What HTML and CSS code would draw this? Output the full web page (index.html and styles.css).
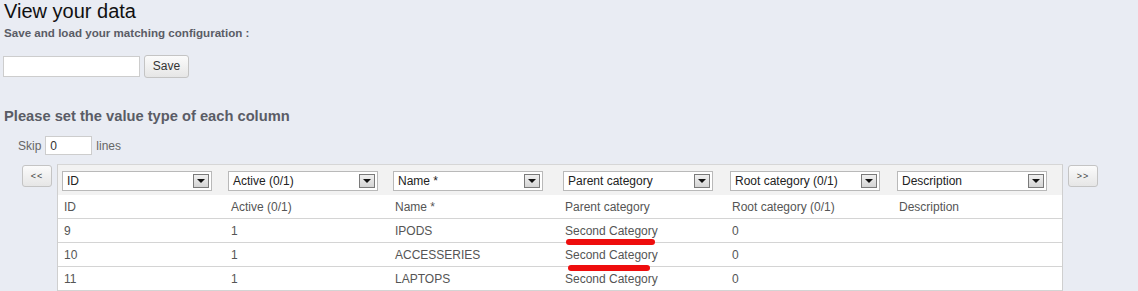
FILE: index.html
```html
<!DOCTYPE html>
<html lang="en">
  <head>
    <meta charset="UTF-8" />
    <title>View your data</title>
    <link rel="stylesheet" href="styles.css">
  </head>
  <body>
    <div class="page">
      <h1>View your data</h1>
      <p class="subtitle">Save and load your matching configuration :</p>

      <div class="save-row">
        <input type="text" class="text-input config-name" />
        <button class="btn btn-save">Save</button>
      </div>

      <h2>Please set the value type of each column</h2>

      <div class="skip-row">
        <span>Skip</span>
        <input type="text" class="text-input skip-input" value="0" />
        <span>lines</span>
      </div>

      <div class="matching">
        <button class="btn btn-nav">&lt;&lt;</button>

        <div class="grid-box">
          <table class="data-table">
            <thead>
              <tr class="type-row">
                <th class="col-1"><div class="fake-select"><span>ID</span><span class="arrow"></span></div></th>
                <th class="col-2"><div class="fake-select"><span>Active (0/1)</span><span class="arrow"></span></div></th>
                <th class="col-3"><div class="fake-select"><span>Name *</span><span class="arrow"></span></div></th>
                <th class="col-4"><div class="fake-select"><span>Parent category</span><span class="arrow"></span></div></th>
                <th class="col-5"><div class="fake-select"><span>Root category (0/1)</span><span class="arrow"></span></div></th>
                <th class="col-6"><div class="fake-select"><span>Description</span><span class="arrow"></span></div></th>
              </tr>
            </thead>
            <tbody>
              <tr>
                <td>ID</td>
                <td>Active (0/1)</td>
                <td>Name *</td>
                <td>Parent category</td>
                <td>Root category (0/1)</td>
                <td>Description</td>
              </tr>
              <tr>
                <td>9</td>
                <td>1</td>
                <td>IPODS</td>
                <td class="marked">Second Category<span class="mark mark-1"></span></td>
                <td>0</td>
                <td></td>
              </tr>
              <tr>
                <td>10</td>
                <td>1</td>
                <td>ACCESSERIES</td>
                <td class="marked">Second Category<span class="mark mark-2"></span></td>
                <td>0</td>
                <td></td>
              </tr>
              <tr>
                <td>11</td>
                <td>1</td>
                <td>LAPTOPS</td>
                <td>Second Category</td>
                <td>0</td>
                <td></td>
              </tr>
            </tbody>
          </table>
        </div>

        <button class="btn btn-nav">&gt;&gt;</button>
      </div>
    </div>
  </body>
</html>
```

FILE: styles.css
```css
body {
  margin: 0;
  background: #e9ecf3;
  font-family: "Liberation Sans", Arial, sans-serif;
  color: #555;
  overflow: hidden;
}

.page {
  padding-left: 4px;
}

h1 {
  margin: 0;
  font-size: 20px;
  line-height: 22px;
  font-weight: normal;
  color: #111;
}

.subtitle {
  margin: 4px 0 0 0;
  font-size: 11.6px;
  line-height: 14px;
  font-weight: bold;
  color: #5a5c66;
}

.save-row {
  display: flex;
  align-items: center;
  gap: 4px;
  margin-top: 15px;
  margin-left: -1px;
  height: 22px;
}

.text-input {
  box-sizing: border-box;
  border: 1px solid #cdcdcd;
  background: #fff;
  font-family: inherit;
  font-size: 12px;
  color: #333;
  padding: 0 4px;
  margin: 0;
  outline: none;
}

.config-name {
  width: 137px;
  height: 21px;
}

.btn {
  box-sizing: border-box;
  border: 1px solid #c4c4c4;
  border-radius: 3px;
  background: linear-gradient(#fbfbfb, #e6e6e6);
  font-family: inherit;
  color: #333;
  padding: 0;
  margin: 0;
  cursor: pointer;
}

.btn-save {
  width: 45px;
  height: 23px;
  font-size: 12px;
}

h2 {
  margin: 31px 0 0 0;
  font-size: 14.7px;
  line-height: 17px;
  font-weight: bold;
  color: #5a5c66;
}

.skip-row {
  display: flex;
  align-items: center;
  gap: 4px;
  margin-top: 11px;
  padding-left: 14px;
  height: 19px;
  font-size: 12px;
  color: #666;
}

.skip-input {
  width: 47px;
  height: 19px;
}

.matching {
  display: flex;
  align-items: flex-start;
  margin-top: 9px;
  padding-left: 18px;
}

.btn-nav {
  width: 30px;
  height: 22px;
  margin-top: 1px;
  font-size: 9px;
  letter-spacing: 1px;
  color: #444;
}

.grid-box {
  width: 1006px;
  margin: 0 5px 0 5px;
  border-left: 1px solid #cfcfcf;
  border-right: 1px solid #cfcfcf;
  border-top: 1px solid #d6d6d6;
  background: #fff;
  box-sizing: border-box;
}

.data-table {
  width: 100%;
  border-collapse: collapse;
  table-layout: fixed;
  font-size: 12px;
}

.col-1 { width: 163px; }
.col-2 { width: 161px; }
.col-3 { width: 166px; }
.col-4 { width: 163px; }
.col-5 { width: 163px; }

.type-row th {
  background: #f2f2f2;
  height: 30px;
  padding: 0 0 0 4px;
  text-align: left;
  font-weight: normal;
  vertical-align: top;
}

.type-row .col-2 {
  padding-left: 3px;
}

.fake-select {
  box-sizing: border-box;
  display: flex;
  align-items: center;
  justify-content: space-between;
  width: 150px;
  height: 20px;
  margin-top: 6px;
  padding: 0 2px 0 4px;
  border: 1px solid #b9b9b9;
  background: #fff;
  color: #222;
  font-size: 12px;
}

.arrow {
  box-sizing: border-box;
  position: relative;
  width: 16px;
  height: 14px;
  border: 1px solid #7a7a7a;
  background: linear-gradient(#f0f0f0, #d4d4d4);
}

.arrow::after {
  content: "";
  position: absolute;
  left: 3px;
  top: 4px;
  border-left: 4px solid transparent;
  border-right: 4px solid transparent;
  border-top: 4px solid #111;
}

.data-table td {
  height: 23px;
  padding: 0 0 0 6px;
  border-bottom: 1px solid #d4d4d4;
  color: #555;
  white-space: nowrap;
  line-height: 14px;
}

.data-table td.marked {
  position: relative;
}

.mark {
  position: absolute;
  height: 6px;
  border-radius: 3px;
  background: #ee0d0d;
  z-index: 2;
}

.mark-1 {
  left: 7px;
  top: 20px;
  width: 89px;
}

.mark-2 {
  left: 9px;
  top: 22px;
  width: 82px;
}
```
